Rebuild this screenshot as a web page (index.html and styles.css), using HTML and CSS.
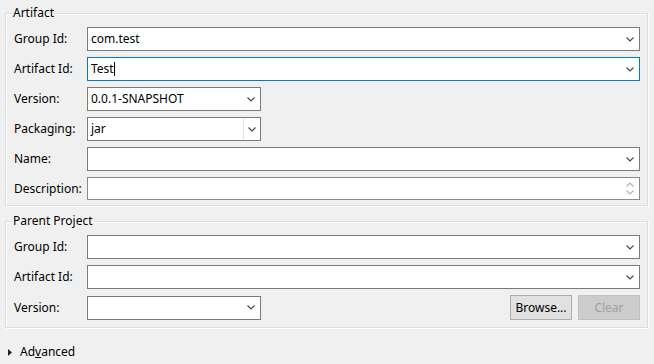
FILE: index.html
```html
<!DOCTYPE html>
<html lang="en">
<head>
  <meta charset="UTF-8" />
  <title>New Maven Project</title>
  <link rel="stylesheet" href="styles.css">
</head>
<body>
  <div class="page">
    <!-- Artifact -->
    <fieldset class="group">
      <legend>Artifact</legend>
      <div class="rows">
        <label>Group Id:</label>
        <div class="field combo"><span class="value">com.test</span><svg class="chev" viewBox="0 0 8 5"><path d="M0.5 0.5 L4 4 L7.5 0.5"/></svg></div>

        <label>Artifact Id:</label>
        <div class="field combo focus"><span class="value">Test<i class="caret"></i></span><svg class="chev" viewBox="0 0 8 5"><path d="M0.5 0.5 L4 4 L7.5 0.5"/></svg></div>

        <label>Version:</label>
        <div class="line"><div class="field combo short"><span class="value">0.0.1-SNAPSHOT</span><svg class="chev" viewBox="0 0 8 5"><path d="M0.5 0.5 L4 4 L7.5 0.5"/></svg></div></div>

        <label>Packaging:</label>
        <div class="line"><div class="field combo short list"><span class="value">jar</span><span class="btn-part"><svg class="chev" viewBox="0 0 8 5"><path d="M0.5 0.5 L4 4 L7.5 0.5"/></svg></span></div></div>

        <label>Name:</label>
        <div class="field combo"><span class="value"></span><svg class="chev" viewBox="0 0 8 5"><path d="M0.5 0.5 L4 4 L7.5 0.5"/></svg></div>

        <label>Description:</label>
        <div class="field text desc"><span class="value"></span>
          <span class="spin">
            <svg viewBox="0 0 8 5"><path d="M0.5 4.5 L4 1 L7.5 4.5"/></svg>
            <svg viewBox="0 0 8 5"><path d="M0.5 0.5 L4 4 L7.5 0.5"/></svg>
          </span>
        </div>
      </div>
    </fieldset>

    <!-- Parent Project -->
    <fieldset class="group parent">
      <legend>Parent Project</legend>
      <div class="rows">
        <label>Group Id:</label>
        <div class="field combo"><span class="value"></span><svg class="chev" viewBox="0 0 8 5"><path d="M0.5 0.5 L4 4 L7.5 0.5"/></svg></div>

        <label>Artifact Id:</label>
        <div class="field combo"><span class="value"></span><svg class="chev" viewBox="0 0 8 5"><path d="M0.5 0.5 L4 4 L7.5 0.5"/></svg></div>

        <label>Version:</label>
        <div class="line">
          <div class="field combo short"><span class="value"></span><svg class="chev" viewBox="0 0 8 5"><path d="M0.5 0.5 L4 4 L7.5 0.5"/></svg></div>
          <div class="buttons">
            <button class="push">Browse...</button>
            <button class="push" disabled>Clear</button>
          </div>
        </div>
      </div>
    </fieldset>

    <div class="advanced">
      <svg class="tri" viewBox="0 0 4 7"><path d="M0 0 L4 3.5 L0 7 Z"/></svg>
      <span>Ad<u>v</u>anced</span>
    </div>
  </div>
</body>
</html>
```

FILE: styles.css
```css
body {
  margin: 0;
  background: #f0f0f0;
  font-family: "Noto Sans", "Noto Sans CJK SC", sans-serif;
  font-size: 12px;
  color: #000;
}

.page { padding: 5px 6px 0 5px; }

/* Group boxes */
.group {
  margin: 0;
  padding: 6px 7px 5px 7px;
  border: 1px solid #dcdcdc;
  box-shadow: inset 1px 1px 0 #fff, 1px 1px 0 #fff;
  min-width: 0;
}
.group legend {
  padding: 0 1px;
  margin-left: -1px;
  line-height: 16px;
  color: #000;
}
.group.parent { margin-top: 7px; padding-bottom: 7px; }

.rows {
  display: grid;
  grid-template-columns: 74px 1fr;
  row-gap: 6px;
  align-items: center;
}
.rows label { line-height: 16px; padding-left: 1px; }

.line { display: flex; align-items: center; }

/* Inputs and combos */
.field {
  height: 24px;
  box-sizing: border-box;
  border: 1px solid #7a7a7a;
  background: #fff;
  display: flex;
  align-items: center;
}
.field.focus { border-color: #0078d7; }
.field.short { width: 174px; }
.field.desc { height: 23px; border-color: #8a8a8a; }

.value {
  flex: 1;
  padding-left: 3px;
  line-height: 16px;
  white-space: nowrap;
}

.chev {
  width: 8px;
  height: 5px;
  margin-right: 5px;
  fill: none;
  stroke: #444;
  stroke-width: 1.1;
}

.list .btn-part {
  align-self: stretch;
  width: 16px;
  border-left: 1px solid #e3e3e3;
  display: flex;
  align-items: center;
  justify-content: center;
}
.list .btn-part .chev { margin-right: 0; }

.caret {
  display: inline-block;
  width: 1px;
  height: 14px;
  background: #000;
  vertical-align: -3px;
}

.spin {
  display: flex;
  flex-direction: column;
  gap: 3px;
  margin-right: 5px;
}
.spin svg {
  width: 8px;
  height: 5px;
  fill: none;
  stroke: #b0b0b0;
  stroke-width: 1.1;
}

/* Buttons */
.buttons {
  margin-left: auto;
  display: flex;
  gap: 6px;
}
.push {
  width: 62px;
  height: 25px;
  margin: 0;
  padding: 0;
  font: inherit;
  background: #e1e1e1;
  border: 1px solid #adadad;
  color: #000;
}
.push:disabled {
  background: #cccccc;
  border-color: #bfbfbf;
  color: #a0a0a0;
}

/* Advanced toggle */
.advanced {
  display: flex;
  align-items: center;
  gap: 8px;
  margin-top: 16px;
  padding-left: 3px;
  line-height: 16px;
}
.advanced .tri { width: 4px; height: 7px; fill: #222; }
.advanced u { text-decoration-thickness: 1px; }
```
